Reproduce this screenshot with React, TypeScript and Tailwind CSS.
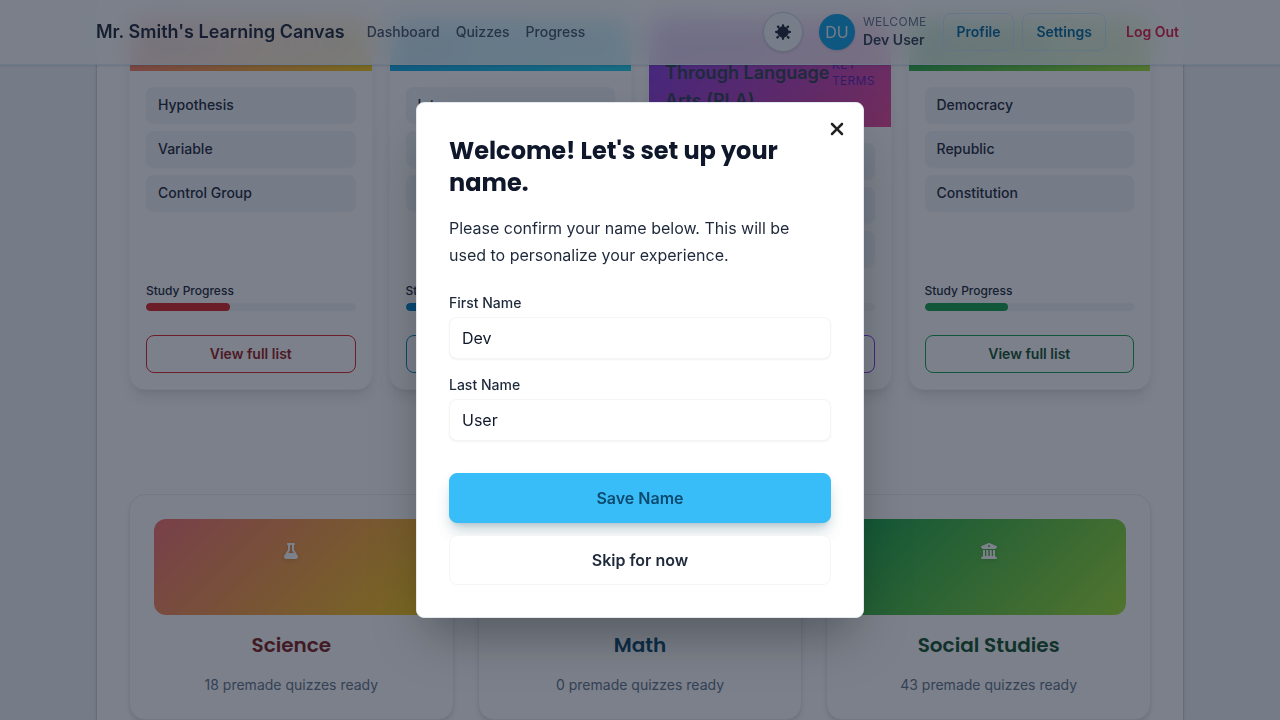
import { FaBuildingColumns, FaCalculator, FaFlask, FaXmark } from 'react-icons/fa6';

const subjects = [
  {
    title: 'Science',
    terms: ['Hypothesis', 'Variable', 'Control Group'],
    header: 'bg-linear-135/srgb from-[#f87171] to-[#facc15]',
    bar: 'bg-[#dc2626]',
    button: 'border-[#dc2626] text-[#991b1b]',
  },
  {
    title: 'Math',
    terms: ['Integer', 'Equation', 'Fraction'],
    header: 'bg-linear-135/srgb from-[#0ea5e9] to-[#22d3ee]',
    bar: 'bg-[#0284c7]',
    button: 'border-[#0284c7] text-[#075985]',
  },
  {
    title: 'Proficiency Through Language Arts (PLA)',
    terms: ['Theme', 'Inference', 'Main Idea'],
    header: 'bg-linear-135/srgb from-[#7c3aed] to-[#ec4899]',
    bar: 'bg-[#7c3aed]',
    button: 'border-[#7c3aed] text-[#5b21b6]',
  },
  {
    title: 'Social Studies',
    terms: ['Democracy', 'Republic', 'Constitution'],
    header: 'bg-linear-135/srgb from-[#16a34a] to-[#a3e635]',
    bar: 'bg-[#16a34a]',
    button: 'border-[#16a34a] text-[#14532d]',
  },
];

const quizzes = [
  { title: 'Science', count: 18, Icon: FaFlask, art: 'bg-linear-135/srgb from-[#f87171] to-[#facc15]', color: 'text-[#7f1d1d]' },
  { title: 'Math', count: 0, Icon: FaCalculator, art: 'bg-linear-135/srgb from-[#0ea5e9] to-[#22d3ee]', color: 'text-[#0c4a6e]' },
  { title: 'Social Studies', count: 43, Icon: FaBuildingColumns, art: 'bg-linear-135/srgb from-[#16a34a] to-[#a3e635]', color: 'text-[#14532d]' },
];

function ThemeIcon() {
  return (
    <svg viewBox="0 0 24 24" className="h-5 w-5" fill="currentColor" stroke="currentColor" strokeWidth="2.8" strokeLinecap="round" aria-hidden="true">
      <circle cx="12" cy="12" r="6.8" stroke="none" />
      <path d="M12 4v1.5M12 18.5V20M3.8 12h1.5M18.7 12h1.5M6 5.6l.6.6M18 5.6l-.6.6M5.2 18.6l.8-.8M18.6 18.8l-.8-.8" />
    </svg>
  );
}

function Header() {
  return (
    <header className="fixed inset-x-0 top-0 z-10 border-b border-[#e0f2fe] bg-white/80 shadow-sm backdrop-blur-md">
      <div className="mx-auto flex h-16 max-w-[1088px] items-center justify-between">
        <div className="flex items-center gap-[22px]">
          <a href="#home" className="text-lg font-semibold text-[#1e293b]">Mr. Smith's Learning Canvas</a>
          <nav className="flex gap-4 text-sm font-medium text-[#475569]">
            <a href="#dashboard">Dashboard</a>
            <a href="#quizzes">Quizzes</a>
            <a href="#progress">Progress</a>
          </nav>
        </div>
        <div className="-mr-[7px] flex items-center gap-4">
          <button aria-label="Toggle theme" className="flex h-10 w-10 items-center justify-center rounded-full border border-[#cbd5e1] bg-[#f8fafc] text-[#1e293b] shadow-sm">
            <ThemeIcon />
          </button>
          <div className="flex items-center gap-2">
            <div className="flex h-9 w-9 items-center justify-center rounded-full bg-[#0ea5e9] text-base text-[#f1f5f9] shadow-sm">DU</div>
            <div>
              <p className="text-xs leading-4 tracking-wide text-[#64748b]">WELCOME</p>
              <p className="text-sm font-semibold text-[#334155]">Dev User</p>
            </div>
          </div>
          <div className="flex items-center gap-2 text-sm font-semibold">
            <a href="#profile" className="rounded-lg border border-[#bae6fd]/70 px-[13px] py-2 text-[#0369a1]">Profile</a>
            <a href="#settings" className="rounded-lg border border-[#bae6fd]/70 px-[13px] py-2 text-[#0369a1]">Settings</a>
            <button className="px-3 py-2 text-[#e11d48]">Log Out</button>
          </div>
        </div>
      </div>
    </header>
  );
}

export default function App() {
  return (
    <div className="h-screen overflow-hidden bg-[#f1f5f9] font-[Inter,'Liberation_Sans',sans-serif] text-[#1e293b]">
      <Header />
      <main className="mx-auto max-w-[1088px] border-x border-[#d1d5db] bg-white px-8 pt-[18px] shadow-sm">
        <section className="grid grid-cols-4 gap-4">
          {subjects.map((s) => (
            <article key={s.title} className="flex flex-col overflow-hidden rounded-2xl border border-[#f8fafc] bg-white shadow-lg">
              <div className={`flex items-center justify-between px-4 py-3 ${s.header}`}>
                <h3 className="max-w-[167px] flex-none text-lg leading-7 font-semibold text-[#334155]">{s.title}</h3>
                <span className="text-xs leading-4 tracking-wide text-[#5b21b6]">KEY TERMS</span>
              </div>
              <div className="flex flex-1 flex-col p-4">
                <ul className="flex flex-col gap-2 pb-4">
                  {s.terms.map((t) => (
                    <li key={t} className="rounded-lg bg-[#f1f5f9] px-3 py-2 text-sm font-medium shadow-xs">{t}</li>
                  ))}
                </ul>
                <div className="mt-auto">
                  <p className="text-xs font-medium">Study Progress</p>
                  <div className="mt-1 h-2 overflow-hidden rounded-full bg-[#f4f6f8]">
                    <div className={`h-2 w-2/5 rounded-full ${s.bar}`} />
                  </div>
                  <button className={`mt-6 w-full rounded-lg border py-2 text-sm font-semibold ${s.button}`}>View full list</button>
                </div>
              </div>
            </article>
          ))}
        </section>
        <section className="mt-[104px] grid grid-cols-3 gap-6">
          {quizzes.map(({ title, count, Icon, art, color }) => (
            <article key={title} className="rounded-2xl border border-[#e9eef5] bg-white p-6 text-center shadow-md">
              <div className={`flex h-24 justify-center rounded-xl pt-6 text-white ${art}`}>
                <Icon className="h-4 w-4 drop-shadow-sm" aria-hidden="true" />
              </div>
              <h3 className={`mt-4 font-[Poppins,Inter,sans-serif] text-xl font-semibold ${color}`}>{title}</h3>
              <p className="mt-4 text-sm text-[#64748b]">{count} premade quizzes ready</p>
            </article>
          ))}
        </section>
      </main>

      <div className="fixed inset-0 z-20 flex items-center justify-center bg-[#0f172a]/55 p-4">
        <div role="dialog" aria-modal="true" aria-labelledby="dialog-title" className="relative w-full max-w-md rounded-lg border border-[#e2e8f0] bg-white p-8 shadow-[0_25px_50px_-12px_rgba(0,0,0,0.35)]">
          <button aria-label="Close" className="absolute top-4 right-4 text-xl text-[#222222]">
            <FaXmark />
          </button>
          <h2 id="dialog-title" className="font-[Poppins,Inter,sans-serif] text-2xl font-bold text-[#0f172a]">Welcome! Let's set up your name.</h2>
          <p className="mt-4 pr-2 text-base leading-[27px] text-[#1e293b]">Please confirm your name below. This will be used to personalize your experience.</p>
          <form className="mt-6" onSubmit={(e) => e.preventDefault()}>
            <label htmlFor="first-name" className="block text-sm font-medium">First Name</label>
            <input id="first-name" defaultValue="Dev" className="mt-1 block w-full rounded-lg border border-[#f5f5f5] bg-white px-3 py-2 text-base text-[#0f172a] shadow-xs" />
            <label htmlFor="last-name" className="mt-4 block text-sm font-medium">Last Name</label>
            <input id="last-name" defaultValue="User" className="mt-1 block w-full rounded-lg border border-[#f5f5f5] bg-white px-3 py-2 text-base text-[#0f172a] shadow-xs" />
            <button type="submit" className="mt-8 w-full rounded-lg border border-[#38bdf8] bg-[#38bdf8] py-3 font-semibold text-[#0c4a6e] shadow-lg shadow-cyan-900/25">Save Name</button>
            <button type="button" className="mt-3 w-full rounded-lg border border-[#f5f5f5] bg-white py-3 font-semibold text-[#1e293b]">Skip for now</button>
          </form>
        </div>
      </div>
    </div>
  );
}
